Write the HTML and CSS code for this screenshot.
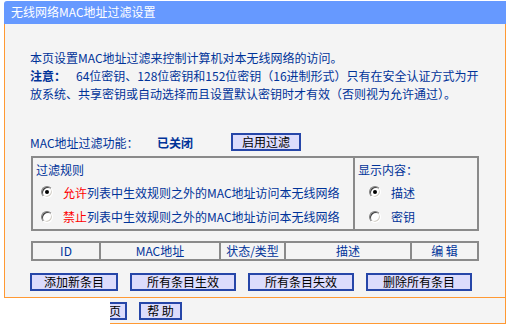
FILE: index.html
```html
<!DOCTYPE html>
<html lang="zh-CN">
<head>
<meta charset="utf-8">
<title>无线网络MAC地址过滤设置</title>
<link rel="stylesheet" href="styles.css">
</head>
<body>
<div class="frame">
  <div class="header">无线网络MAC地址过滤设置</div>
  <div class="panel">
    <p class="intro">本页设置MAC地址过滤来控制计算机对本无线网络的访问。</p>
    <p class="note"><b class="note-label">注意：</b>64位密钥、128位密钥和152位密钥（16进制形式）只有在安全认证方式为开<br>放系统、共享密钥或自动选择而且设置默认密钥时才有效（否则视为允许通过）。</p>
    <div class="func-row">
      <span class="func-label">MAC地址过滤功能：</span>
      <span class="func-status">已关闭</span>
      <button class="btn btn-enable">启用过滤</button>
    </div>
    <table class="rules">
      <tr>
        <td class="rules-left">
          <div class="rule-title">过滤规则</div>
          <div class="rule-row r1"><span class="radio checked"></span><span><em class="red">允许</em>列表中生效规则之外的MAC地址访问本无线网络</span></div>
          <div class="rule-row r2"><span class="radio"></span><span><em class="red">禁止</em>列表中生效规则之外的MAC地址访问本无线网络</span></div>
        </td>
        <td class="rules-right">
          <div class="rule-title">显示内容：</div>
          <div class="show-row r1"><span class="radio checked"></span><span>描述</span></div>
          <div class="show-row r2"><span class="radio"></span><span>密钥</span></div>
        </td>
      </tr>
    </table>
    <table class="list">
      <tr>
        <td class="c-id">ID</td>
        <td class="c-mac">MAC地址</td>
        <td class="c-state">状态/类型</td>
        <td class="c-desc">描述</td>
        <td class="c-edit">编 辑</td>
      </tr>
    </table>
    <div class="actions">
      <button class="btn w88">添加新条目</button>
      <button class="btn w106">所有条目生效</button>
      <button class="btn w106">所有条目失效</button>
      <button class="btn w106">删除所有条目</button>
    </div>
  </div>
  <div class="bar">
    <button class="btn btn-prev">上一页</button>
    <button class="btn btn-help">帮 助</button>
  </div>
</div>
<div class="mask"></div>
</body>
</html>
```
FILE: styles.css
```css
html, body {
  margin: 0;
  padding: 0;
  background: #ffffff;
}
body {
  position: relative;
  width: 509px;
  height: 329px;
  overflow: hidden;
  font-family: "Noto Sans CJK SC", "Noto Sans", sans-serif;
  font-size: 12px;
  color: #003399;
}
.frame {
  margin: 1px 0 0 4px;
  width: 502px;
}
.header {
  height: 23px;
  line-height: 22px;
  background: #6699ff;
  color: #ffffff;
  padding-left: 7px;
  font-size: 12px;
  border-top-left-radius: 3px;
}
.panel {
  background: #f4f4f4;
  border-left: 1px solid #ff9933;
  border-right: 1px solid #ff9933;
  border-bottom: 1px solid #ff9933;
  padding: 25px 0 6px 25px;
}
.intro, .note {
  margin: 0;
  line-height: 18px;
  white-space: nowrap;
}
.note-label {
  font-weight: bold;
  margin-right: 10px;
}
.func-row {
  margin-top: 30px;
  height: 18px;
  display: flex;
  align-items: center;
}
.func-label {
  width: 127px;
}
.func-status {
  width: 74px;
  font-weight: bold;
}
.btn {
  font-family: "Noto Sans CJK SC", "Noto Sans", sans-serif;
  font-size: 12px;
  color: #000000;
  background: #dcdcfc;
  border: 2px solid #2646a8;
  height: 18px;
  padding: 0;
  line-height: 14px;
  margin: 0;
}
.btn-enable {
  width: 70px;
}
.rules, .list {
  border-collapse: separate;
  border-spacing: 0;
  border: 1px solid #8a8a8a;
  margin-left: 1px;
  width: 448px;
}
.rules td, .list td {
  border: 1px solid #8a8a8a;
  padding: 0;
}
.rules {
  margin-top: 5px;
  height: 75px;
}
.rules td {
  vertical-align: top;
}
.rules-left {
  width: 317px;
  padding-left: 3px !important;
}
.rules-right {
  padding-left: 3px !important;
}
.rule-title {
  height: 22px;
  line-height: 24px;
}
.r1 {
  height: 24px;
}
.r2 {
  height: 25px;
}
.rule-row, .show-row {
  display: flex;
  align-items: center;
}
.rule-row {
  padding-left: 5px;
}
.rule-row .radio {
  margin-right: 10px;
}
.show-row {
  padding-left: 11px;
}
.show-row .radio {
  margin-right: 10px;
}
.red {
  color: #ff0000;
  font-style: normal;
}
.radio {
  position: relative;
  flex: none;
  box-sizing: border-box;
  width: 12px;
  height: 12px;
  border-radius: 50%;
  border: 1px solid;
  border-color: #808080 #ffffff #ffffff #808080;
  box-shadow: inset 1px 1px 0 #404040, inset -1px -1px 0 #d4d0c8;
  background: #ffffff;
}
.radio.checked::after {
  content: "";
  position: absolute;
  left: 3px;
  top: 3px;
  width: 4px;
  height: 4px;
  border-radius: 50%;
  background: #000000;
}
.list {
  margin-top: 10px;
  height: 20px;
}
.list td {
  text-align: center;
  line-height: 14px;
}
.c-id { width: 66px; }
.c-mac { width: 118px; }
.c-state { width: 63px; }
.c-desc { width: 124px; }
.actions {
  margin-top: 12px;
  display: flex;
  gap: 12px;
}
.w88 { width: 88px; }
.w106 { width: 106px; }
.bar {
  background: #f4f4f4;
  border-left: 1px solid #ff9933;
  border-right: 1px solid #ff9933;
  border-bottom: 1px solid #ff9933;
  height: 25px;
  display: flex;
  align-items: flex-start;
  gap: 12px;
  padding-left: 74px;
  padding-top: 4px;
  box-sizing: border-box;
  height: 26px;
}
.btn-prev {
  width: 48px;
}
.btn-help {
  width: 43px;
}
.mask {
  position: absolute;
  left: 0;
  top: 298px;
  width: 110px;
  height: 31px;
  background: #ffffff;
}
```
